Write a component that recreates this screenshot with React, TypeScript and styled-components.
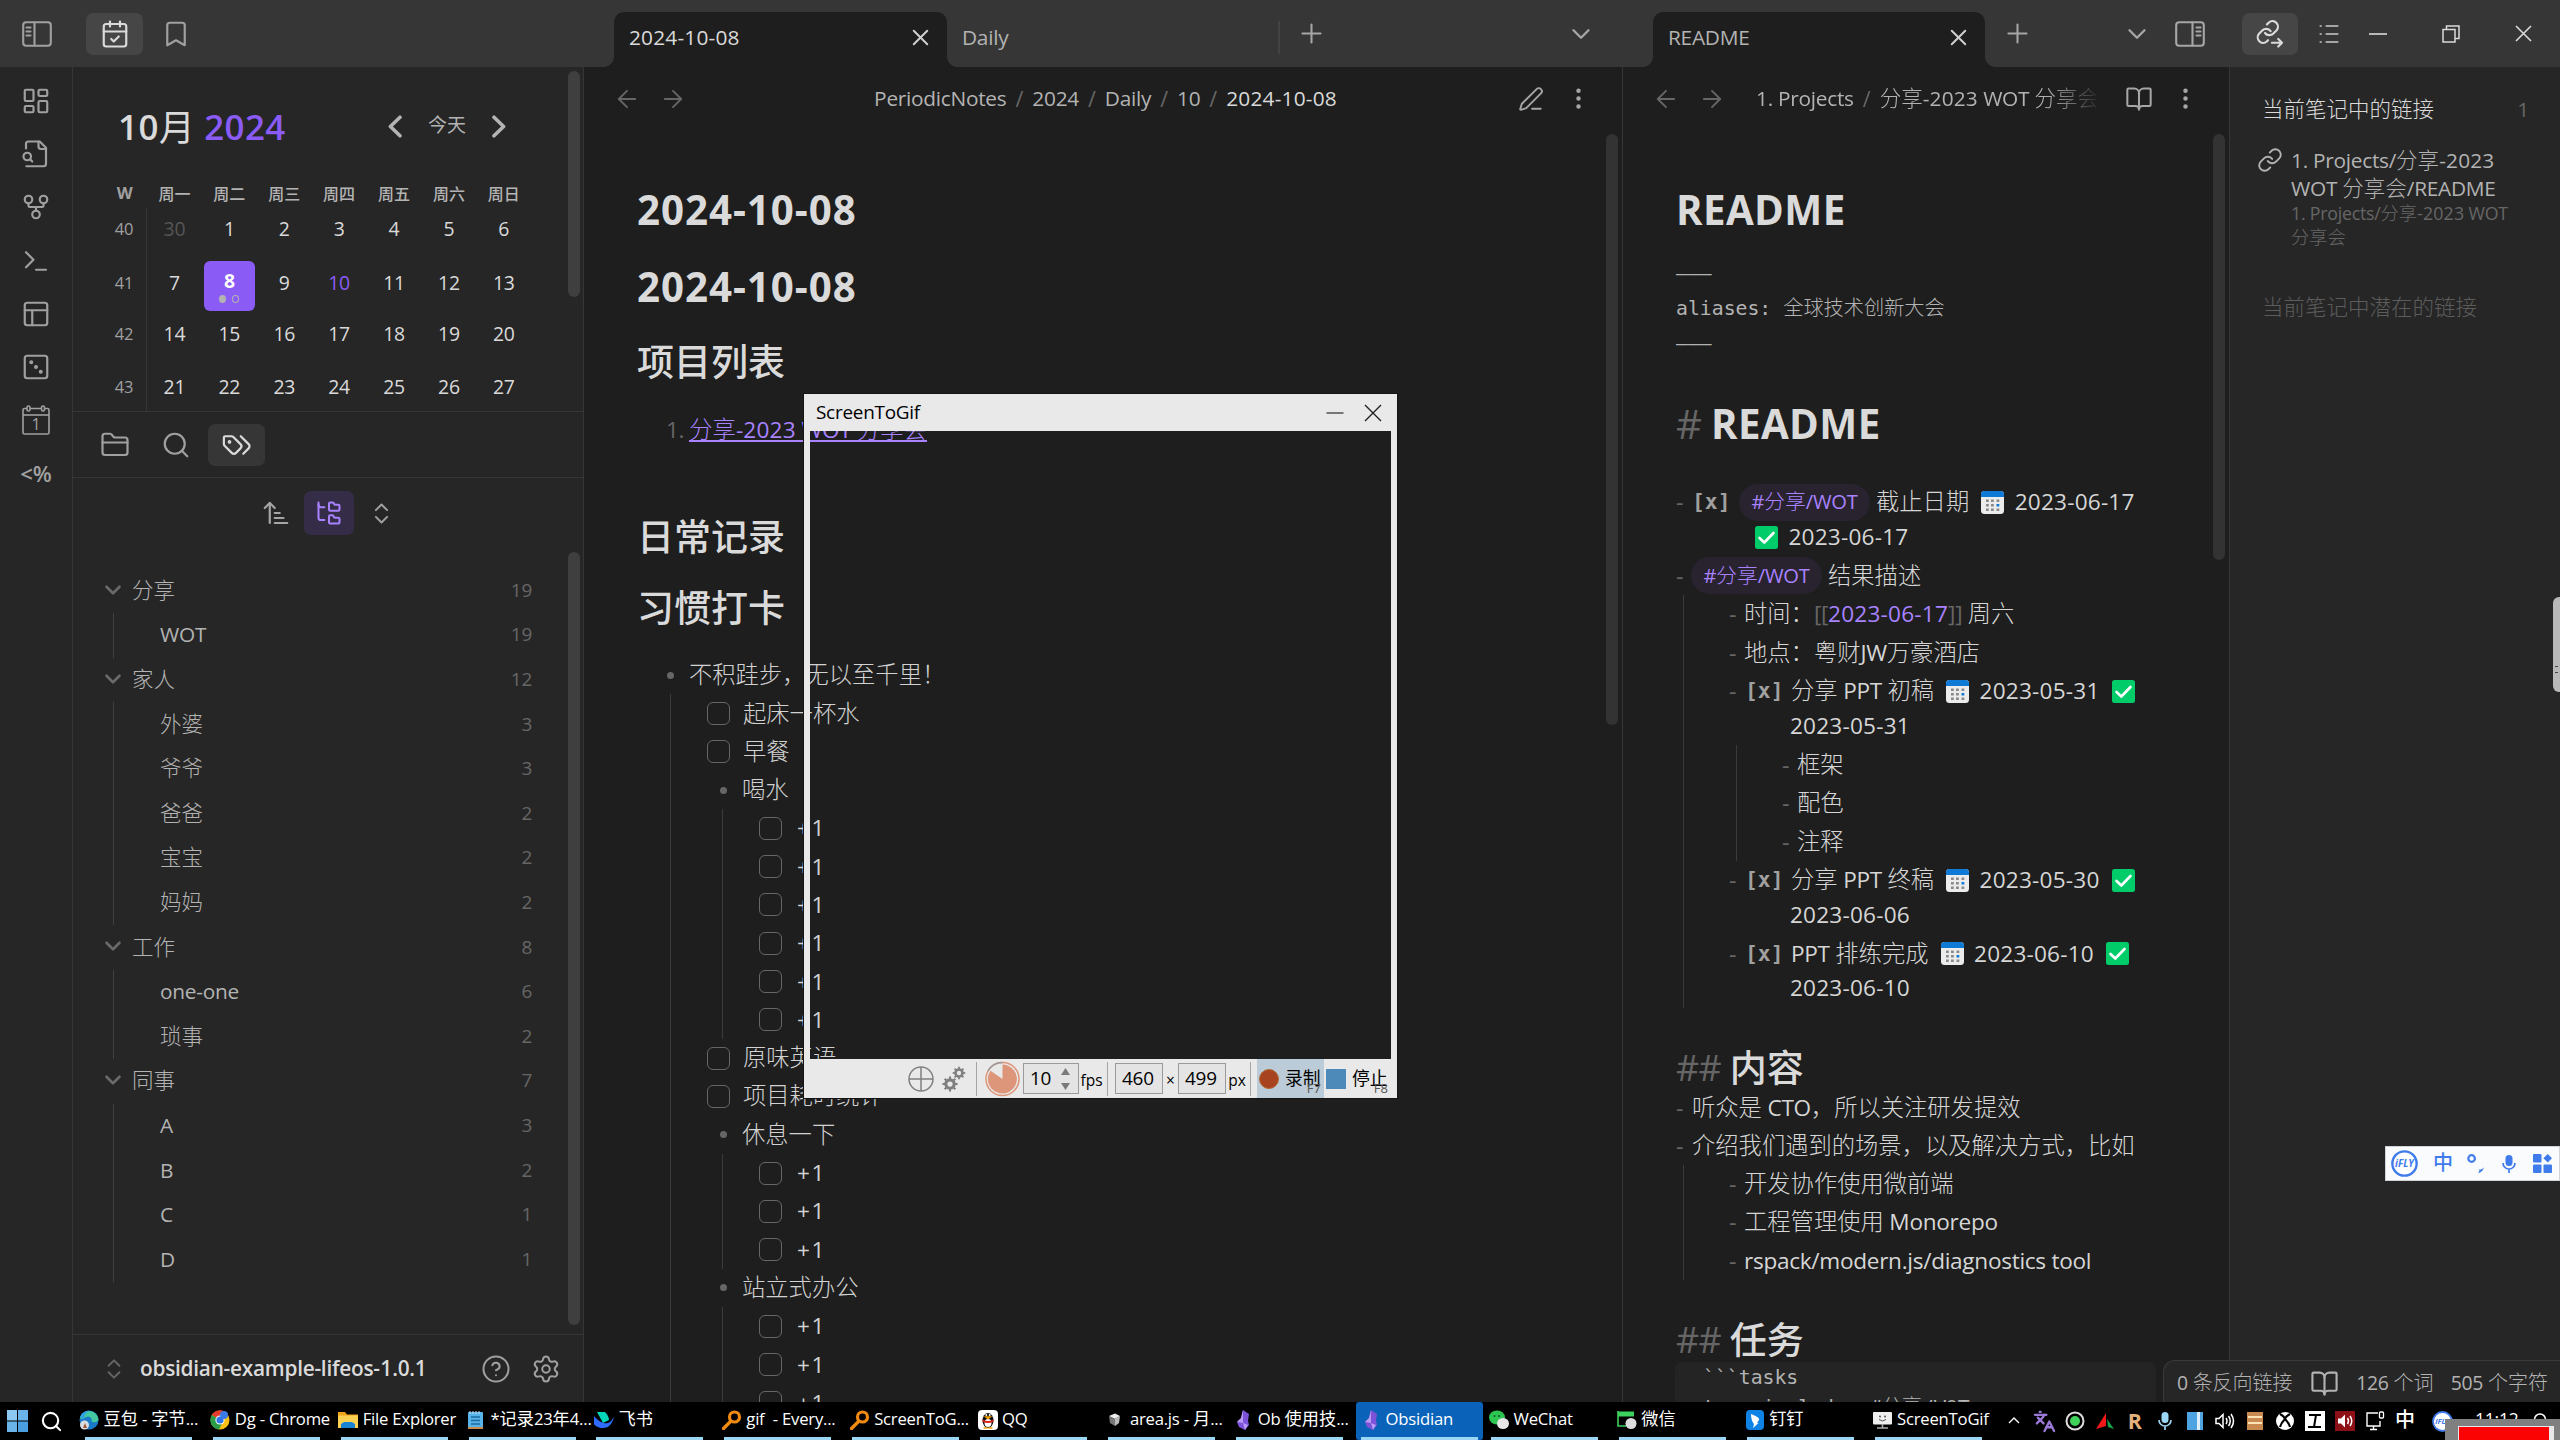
import React from 'react';
import styled, { createGlobalStyle, css } from 'styled-components';
import {
  ArrowLeft, ArrowRight, ArrowUpNarrowWide, Bookmark, BookOpen, CalendarCheck, ChevronDown,
  ChevronsUpDown, CircleHelp, FolderTree, GitFork, Languages, LayoutDashboard,
  Link, EllipsisVertical, PenLine, Plus, Search, Settings, Terminal, X,
} from 'lucide-react';

const c = {
  bar: '#363636', side: '#262626', main: '#1e1e1e', line: '#363636', hover: '#464646',
  text: '#dadada', muted: '#b3b3b3', faint: '#666666', accent: '#8a5cf5', link: '#a882ff',
};

const Global = createGlobalStyle`
  * { box-sizing: border-box; }
  html, body { margin: 0; padding: 0; background: #1e1e1e; overflow: hidden; }
  body { font-family: "Open Sans", "Noto Sans", "Noto Sans CJK SC", sans-serif; color: ${c.text}; }
  svg { display: block; flex: none; }
`;

/* ---------- text ---------- */

const Latin = styled.span<{ $num?: boolean }>`
  font-size: 0.97em;
  letter-spacing: ${p => (p.$num ? 'var(--num, 0.009em)' : 'var(--ls, -0.013em)')};
  line-height: 0;
  vertical-align: 0.045em;
`;
const Han = styled.span`
  font-family: "Noto Sans CJK SC", sans-serif;
  font-weight: var(--han, 300);
  line-height: 0;
  vertical-align: 0.03em;
`;
const Run = styled.span`white-space: pre;`;
const Mixed = ({ children }: { children: string }) => (
  <Run>
    {children.split(/([\u2E80-\uFFEF]+|\d*-\d[\d-]*)/).filter(Boolean).map((run, i) =>
      /[\u2E80-\uFFEF]/.test(run)
        ? <Han key={i}>{run}</Han>
        : <Latin key={i} $num={/^\d*-\d/.test(run)}>{run}</Latin>)}
  </Run>
);

interface TextProps { $size?: number; $color?: string; $weight?: number; $han?: number; $ml?: number }
const Text = styled.span<TextProps>`
  white-space: pre;
  flex: none;
  ${p => p.$size && css`font-size: ${p.$size}px;`}
  ${p => p.$color && css`color: ${p.$color};`}
  ${p => p.$weight && css`font-weight: ${p.$weight};`}
  ${p => p.$han && css`--han: ${p.$han};`}
  ${p => p.$ml && css`margin-left: ${p.$ml}px;`}
`;

/* ---------- shell ---------- */

const Screen = styled.div`
  width: 2560px; height: 1440px; position: relative; overflow: hidden;
  display: flex; flex-direction: column; background: ${c.main};
`;
const TitleBar = styled.header`display: flex; height: 67px; background: ${c.bar}; flex: none;`;
const TabGroup = styled.div<{ $w: number; $pl?: number }>`
  width: ${p => p.$w}px; padding-left: ${p => p.$pl || 0}px; display: flex; align-items: stretch;
`;
const Slot = styled.div<{ $w: number; $color?: string; $pt?: number }>`
  width: ${p => p.$w}px; flex: none; display: flex; align-items: center; justify-content: center;
  color: ${p => p.$color || '#a6a6a6'}; padding-top: ${p => p.$pt || 0}px;
`;
const IconButton = styled.div<{ $active?: boolean; $w?: number; $bg?: string; $ml?: number }>`
  width: ${p => p.$w || 57}px; height: 42px; border-radius: 7px; align-self: center; flex: none;
  display: flex; align-items: center; justify-content: center; margin-left: ${p => p.$ml || 0}px;
  background: ${p => (p.$active ? p.$bg || c.hover : 'transparent')};
  color: ${p => (p.$active ? '#dadada' : '#a0a0a0')};
`;
const Spacer = styled.div`flex: 1;`;
const Gap = styled.div<{ $h?: number; $w?: number }>`height: ${p => p.$h || 0}px; width: ${p => p.$w || 0}px; flex: none;`;
const Tab = styled.div<{ $active?: boolean; $w: number }>`
  position: relative; width: ${p => p.$w}px; margin-top: 12px; height: 55px; flex: none;
  padding: 0 13px 4px 15px; display: flex; align-items: center; justify-content: space-between;
  border-radius: 10px 10px 0 0; font-size: 21.5px; line-height: 51px;
  color: ${p => (p.$active ? c.text : c.muted)};
  background: ${p => (p.$active ? c.main : 'transparent')};
  ${p => p.$active && css`
    &::before, &::after { content: ''; position: absolute; bottom: 0; width: 10px; height: 10px; }
    &::before { left: -10px; background: radial-gradient(circle at 0 0, transparent 9.5px, ${c.main} 10px); }
    &::after { right: -10px; background: radial-gradient(circle at 100% 0, transparent 9.5px, ${c.main} 10px); }
  `}
`;
const TabDivider = styled.div`width: 2px; height: 33px; margin-top: 21px; margin-left: -2px; background: #434343;`;

const Body = styled.div`display: flex; height: 1335px; flex: none; overflow: hidden;`;
const Ribbon = styled.nav`
  width: 73px; border-right: 1px solid ${c.line}; background: ${c.side}; color: #a0a0a0; flex: none;
  display: flex; flex-direction: column; align-items: center; padding-top: 7.5px;
`;
const RibbonItem = styled.div`height: 53.2px; display: flex; align-items: center; justify-content: center; font-weight: 600; flex: none;`;
const Sidebar = styled.aside`width: 511px; border-right: 1px solid ${c.line}; background: ${c.side}; display: flex; flex-direction: column; flex: none;`;

/* ---------- calendar ---------- */

const CalendarPanel = styled.section`height: 345px; border-bottom: 1px solid ${c.line}; display: flex; overflow: hidden; flex: none;`;
const CalendarMain = styled.div`flex: 1; padding-top: 29px;`;
const Rail = styled.div<{ $w: number; $pt: number; $pr: number }>`
  width: ${p => p.$w}px; padding: ${p => p.$pt}px ${p => p.$pr}px 0 0; flex: none;
`;
const Thumb = styled.div<{ $h: number; $bg?: string }>`height: ${p => p.$h}px; border-radius: 6px; background: ${p => p.$bg || '#3f3f3f'};`;
const CalHead = styled.div`
  height: 60px; padding: 0 62px 0 45px; display: flex; align-items: center; justify-content: space-between;
`;
const CalTitle = styled.div`
  font-size: 36px; line-height: 60px; padding-top: 5px; font-weight: 600; white-space: pre; --han: 400; --ls: 0.012em;
  span:last-child { color: ${c.accent}; }
`;
const CalNav = styled.div`display: flex; align-items: center; gap: 26px; color: ${c.muted}; font-size: 19px; line-height: 36px;`;
const CalGrid = styled.div`padding-left: 29px; margin-top: 24px;`;
const WeekRow = styled.div<{ $h: number; $pb?: number; $head?: boolean }>`
  display: grid; grid-template-columns: 45px repeat(7, 54.9px); height: ${p => p.$h}px;
  font-size: 20px; line-height: 28px; text-align: center; color: ${c.text};
  > div { display: flex; align-items: center; justify-content: center; padding-bottom: ${p => p.$pb || 0}px; }
  > div:first-child { font-size: 17px; color: #a0a0a0; ${p => !p.$head && css`border-right: 1px solid ${c.line};`} }
  ${p => p.$head && css`font-size: 16px; color: ${c.muted}; font-weight: 700; --han: 500;`}
`;
const Today = styled.div`
  width: 51px; height: 50px; margin-top: 4px; border-radius: 6px; background: ${c.accent}; color: #fff; font-weight: 700;
  display: flex; flex-direction: column; align-items: center; padding-top: 7px; flex: none;
`;
const Dots = styled.div`display: flex; gap: 6px; margin-top: -1px;`;
const Dot = styled.i<{ $open?: boolean }>`
  width: 7px; height: 8px; border-radius: 50%;
  ${p => (p.$open ? css`border: 1.5px solid #b3b3b3;` : css`background: #b3b3b3;`)}
`;

const WEEKS: string[][] = [
  ['40', '30', '1', '2', '3', '4', '5', '6'],
  ['41', '7', '8', '9', '10', '11', '12', '13'],
  ['42', '14', '15', '16', '17', '18', '19', '20'],
  ['43', '21', '22', '23', '24', '25', '26', '27'],
];

const NavChevron = ({ flip }: { flip?: boolean }) => (
  <svg width="14" height="23" viewBox="0 0 14 23" fill="none" stroke="#b3b3b3" strokeWidth="3.6" strokeLinecap="round" strokeLinejoin="round">
    <path d={flip ? 'M2 2.2 11.6 11.5 2 20.8' : 'M12 2.2 2.4 11.5 12 20.8'} />
  </svg>
);

const Calendar = () => (
  <CalendarPanel>
    <CalendarMain>
      <CalHead>
        <CalTitle><Latin>10</Latin><Han>月</Han> <Latin>2024</Latin></CalTitle>
        <CalNav><NavChevron /><Text $han={400}><Mixed>今天</Mixed></Text><NavChevron flip /></CalNav>
      </CalHead>
      <CalGrid>
        <WeekRow $h={28} $pb={4} $head>
          {['W', '周一', '周二', '周三', '周四', '周五', '周六', '周日'].map(d => <div key={d}><Mixed>{d}</Mixed></div>)}
        </WeekRow>
        {WEEKS.map((w, r) => (
          <WeekRow key={r} $h={r === 0 ? 48.6 : 52.6} $pb={r === 0 ? 4 : 0}>
            {w.map((d, i) => (
              <div key={i}>
                {d === '8' ? <Today><Mixed>8</Mixed><Dots><Dot /><Dot $open /></Dots></Today>
                  : <Text $color={d === '30' ? '#555' : d === '10' ? c.accent : undefined}><Mixed>{d}</Mixed></Text>}
              </div>
            ))}
          </WeekRow>
        ))}
      </CalGrid>
    </CalendarMain>
    <Rail $w={15} $pt={4} $pr={3}><Thumb $h={226} /></Rail>
  </CalendarPanel>
);

/* ---------- custom line glyphs ---------- */

const Glyph = ({ children, size = 30, sw = 1.75 }: { children: React.ReactNode; size?: number; sw?: number }) => (
  <svg width={size} height={size} viewBox="0 0 24 24" fill="none" stroke="currentColor" strokeWidth={sw} strokeLinecap="round" strokeLinejoin="round">
    {children}
  </svg>
);
const SideToggle = ({ right }: { right?: boolean }) => (
  <svg width="30" height="26" viewBox="0 0 30 26" fill="none" stroke="currentColor" strokeWidth="2.1" strokeLinecap="round">
    <rect x="1.2" y="1.2" width="27.6" height="23.6" rx="3" />
    {right ? <path d="M17.5 1.5v23M21.5 6.5h4M21.5 10.5h4M21.5 14.5h4" /> : <path d="M12.5 1.5v23M4.5 6.5h4M4.5 10.5h4M4.5 14.5h4" />}
  </svg>
);
const FolderGlyph = () => (
  <Glyph>
    <path d="M20 20a2 2 0 0 0 2-2V8a2 2 0 0 0-2-2h-7.9a2 2 0 0 1-1.69-.9L9.6 3.9A2 2 0 0 0 7.93 3H4a2 2 0 0 0-2 2v13a2 2 0 0 0 2 2Z" />
    <path d="M2 10h20" />
  </Glyph>
);
const FileSearchGlyph = () => (
  <Glyph>
    <path d="M14 2v4a2 2 0 0 0 2 2h4" />
    <path d="M4.300 21.800H18a2 2 0 0 0 2-2V7l-5-5H6a2 2 0 0 0-2 2v3.500" />
    <circle cx="5" cy="14" r="3" /><path d="m9 18-1.500-1.500" />
  </Glyph>
);
const LayoutGlyph = () => <Glyph><rect x="3" y="3" width="18" height="18" rx="2" /><path d="M3 9h18M9 21V9" /></Glyph>;
const DiceGlyph = () => (
  <Glyph>
    <rect x="3" y="3" width="18" height="18" rx="2" />
    <g fill="currentColor" strokeWidth="1"><circle cx="8.200" cy="8.200" r="1.100" /><circle cx="12" cy="12" r="1.100" /><circle cx="15.800" cy="15.800" r="1.100" /></g>
  </Glyph>
);
const TagsGlyph = () => (
  <Glyph>
    <path d="M9.586 5.586A2 2 0 0 0 8.172 5H3a1 1 0 0 0-1 1v5.172a2 2 0 0 0 .586 1.414L8.290 18.290a2.426 2.426 0 0 0 3.420 0l3.580-3.580a2.426 2.426 0 0 0 0-3.420z" transform="translate(-.5 0)" />
    <path d="m15 5 6.300 6.300a2.400 2.400 0 0 1 0 3.400L17 19" /><circle cx="6" cy="9.500" r=".6" fill="currentColor" />
  </Glyph>
);
const DayGlyph = () => (
  <svg width="30" height="32" viewBox="0 0 30 32" fill="none" stroke="currentColor" strokeWidth="1.6">
    <rect x="2" y="4.5" width="26" height="25.5" rx="1.5" /><path d="M2 11h26" />
    <rect x="6" y="2" width="3" height="5" rx="1.5" fill="#262626" /><rect x="20.5" y="2" width="3" height="5" rx="1.5" fill="#262626" />
    <text x="15" y="26" fontSize="16" fontWeight="400" textAnchor="middle" fill="currentColor" stroke="none" fontFamily="Open Sans">1</text>
  </svg>
);
const ListGlyph = () => (
  <svg width="20" height="20" viewBox="0 0 20 20" stroke="currentColor" strokeWidth="2.200" strokeLinecap="round">
    <path d="M7.500 2h11M7.500 10h11M7.500 18h11M1.500 2h.4M1.500 10h.4M1.500 18h.4" />
  </svg>
);
const RestoreGlyph = () => (
  <svg width="18" height="18" viewBox="0 0 18 18" fill="none" stroke="#dadada" strokeWidth="1.5"><rect x="1" y="4.5" width="12" height="12.5" /><path d="M4.5 4.500V1H17v12.500h-4" /></svg>
);
const LinkOut = () => (
  <Glyph>
    <path d="M9 12.200a4.400 4.400 0 0 0 6.700.4l2.600-2.600a4.400 4.400 0 0 0-6.200-6.200l-1.500 1.500" transform="translate(-1 -1)" />
    <path d="M12.700 10.300a4.400 4.400 0 0 0-6.700-.5l-2.600 2.600a4.400 4.400 0 0 0 6.200 6.200l1-1" transform="translate(-.2 -.6)" />
    <path d="M13.500 19h8M18.600 16l3 3-3 3" />
  </Glyph>
);

/* ---------- tags panel ---------- */

const PaneTabs = styled.div`height: 66px; border-bottom: 1px solid ${c.line}; padding-left: 13px; display: flex; gap: 4px; flex: none;`;
const TagTools = styled.div`height: 74px; padding: 0 0 4px 184px; display: flex; align-items: center; color: #a0a0a0; flex: none;`;
const TreeToggle = styled.div`width: 50px; height: 44px; border-radius: 7px; background: #352d47; color: ${c.link}; display: flex; align-items: center; justify-content: center; margin: 0 14px 0 10px;`;
const TagArea = styled.div`flex: 1; display: flex; min-height: 0;`;
const TagList = styled.div`flex: 1; padding-top: 16.5px;`;
const TagRow = styled.div<{ $child?: boolean }>`
  height: 44.6px; line-height: 44px; display: flex; align-items: center; justify-content: space-between;
  margin-left: 40px; padding: 0 36px 0 ${p => (p.$child ? 46 : 19)}px; font-size: 21.5px; color: ${c.muted};
  position: relative;
  ${p => p.$child && css`border-left: 1px solid #404040;`}
`;
const Fold = styled.div`position: absolute; left: -13px; top: 8px; color: #6a6a6a;`;
const Vault = styled.footer`
  height: 68px; border-top: 1px solid ${c.line}; display: flex; align-items: center; padding: 0 22px 0 27px;
  font-size: 21.5px; line-height: 60px; font-weight: 600; color: ${c.text}; flex: none; --ls: -0.013em;
`;
const VaultActions = styled.div`display: flex; gap: 20px; margin-left: auto; color: #a0a0a0;`;

const TAGS: [string, string, boolean][] = [
  ['分享', '19', false], ['WOT', '19', true], ['家人', '12', false], ['外婆', '3', true], ['爷爷', '3', true],
  ['爸爸', '2', true], ['宝宝', '2', true], ['妈妈', '2', true], ['工作', '8', false], ['one-one', '6', true],
  ['琐事', '2', true], ['同事', '7', false], ['A', '3', true], ['B', '2', true], ['C', '1', true], ['D', '1', true],
];

const TagsPanel = () => (
  <>
    <PaneTabs>
      <IconButton><FolderGlyph /></IconButton>
      <IconButton><Search size={30} strokeWidth={1.75} /></IconButton>
      <IconButton $active $bg="#363636"><TagsGlyph /></IconButton>
    </PaneTabs>
    <TagTools>
      <Slot $w={37}><ArrowUpNarrowWide size={30} strokeWidth={1.75} /></Slot>
      <TreeToggle><FolderTree size={28} strokeWidth={1.75} /></TreeToggle>
      <ChevronsUpDown size={27} strokeWidth={1.75} />
    </TagTools>
    <TagArea>
      <TagList>
        {TAGS.map(([name, n, child]) => (
          <TagRow key={name} $child={child}>
            {!child && <Fold><ChevronDown size={26} strokeWidth={2.4} /></Fold>}
            <Text><Mixed>{name}</Mixed></Text>
            <Text $size={19.5} $color={c.faint}><Mixed>{n}</Mixed></Text>
          </TagRow>
        ))}
      </TagList>
      <Rail $w={15} $pt={0} $pr={3}><Thumb $h={773} /></Rail>
    </TagArea>
    <Vault>
      <Slot $w={27} $color="#666"><ChevronsUpDown size={26} strokeWidth={1.75} /></Slot>
      <Text $ml={13}><Mixed>obsidian-example-lifeos-1.0.1</Mixed></Text>
      <VaultActions><CircleHelp size={30} strokeWidth={1.6} /><Settings size={30} strokeWidth={1.6} /></VaultActions>
    </Vault>
  </>
);

/* ---------- view header ---------- */

const Pane = styled.section<{ $w: number }>`width: ${p => p.$w}px; border-right: 1px solid ${c.line}; display: flex; flex-direction: column; flex: none;`;
const ViewHeader = styled.div`height: 63px; display: flex; align-items: stretch; padding: 0 20px; flex: none;`;
const Crumbs = styled.div<{ $fade?: boolean; $pl: number }>`
  flex: 1; min-width: 0; display: flex; align-items: center; justify-content: ${p => (p.$fade ? 'flex-start' : 'center')};
  padding-left: ${p => p.$pl}px; font-size: 21.5px; line-height: 62px; color: ${c.muted}; white-space: pre; overflow: hidden;
  ${p => p.$fade && css`margin-right: 20px; mask-image: linear-gradient(90deg, #000 calc(100% - 50px), transparent 102%);`}
`;
const Sep = styled.span`color: ${c.faint}; margin: 0 9px;`;
const ViewBody = styled.div`flex: 1; min-height: 0; display: flex; overflow: hidden;`;
const Doc = styled.div<{ $pl: number }>`flex: 1; min-width: 0; padding: 53px 0 0 ${p => p.$pl}px; font-size: 23.3px;`;
const Heading = styled.div<{ $h: number; $mt?: number; $size: number }>`
  height: ${p => p.$h}px; line-height: ${p => p.$h}px; margin-top: ${p => p.$mt || 0}px; font-size: ${p => p.$size}px;
  font-weight: 700; --han: 500; --num: 0.024em; --ls: 0.010em; color: ${c.text}; white-space: pre;
`;
const Mark = styled.span`color: ${c.faint}; font-weight: 400; --ls: -0.018em;`;

/* ---------- daily note ---------- */

const Task = styled.div<{ $pl: number }>`
  height: 38.3px; line-height: 38px; padding-left: ${p => p.$pl}px; display: flex; align-items: center; color: #d2d2d2; white-space: pre;
`;
const Guide = styled.div<{ $ml: number; $ls?: string }>`
  margin-left: ${p => p.$ml}px; border-left: 1px solid #3a3a3a; ${p => p.$ls && css`--ls: ${p.$ls};`}
`;
const Check = styled.i<{ $mr: number }>`
  width: 23px; height: 23px; border: 1.5px solid #666; border-radius: 6px; margin-right: ${p => p.$mr}px; flex: none;
`;
const Bullet = styled.i<{ $mr: number }>`width: 7px; height: 7px; border-radius: 50%; background: #666; margin-right: ${p => p.$mr}px; flex: none;`;
const OrderedLink = styled.div`
  height: 38.3px; line-height: 38px; margin-top: 23px; padding-left: 29px; display: flex; white-space: pre;
  color: ${c.faint};
`;
const NoteLink = styled.span`color: ${c.link}; margin-left: 5px; height: 31px; border-bottom: 2px solid ${c.link};`;

const Plus1 = ({ n }: { n: number }) => (
  <Guide $ml={51} $ls="0.07em">
    {Array.from({ length: n }, (_, i) => <Task key={i} $pl={36}><Check $mr={15} /><Mixed>+1</Mixed></Task>)}
  </Guide>
);
const CheckTask = ({ children }: { children: string }) => <Task $pl={36}><Check $mr={13} /><Mixed>{children}</Mixed></Task>;
const BulletTask = ({ children }: { children: string }) => <Task $pl={49}><Bullet $mr={15} /><Mixed>{children}</Mixed></Task>;

const DailyNote = () => (
  <Pane $w={1039}>
    <ViewHeader>
      <Slot $w={46} $color="#666"><ArrowLeft size={28} strokeWidth={1.6} /></Slot>
      <Slot $w={46} $color="#666"><ArrowRight size={28} strokeWidth={1.6} /></Slot>
      <Crumbs $pl={8}>
        {['PeriodicNotes', '2024', 'Daily', '10'].map(t => <React.Fragment key={t}><Mixed>{t}</Mixed><Sep>/</Sep></React.Fragment>)}
        <Text $color={c.text}><Mixed>2024-10-08</Mixed></Text>
      </Crumbs>
      <Slot $w={47}><PenLine size={26} strokeWidth={1.75} /></Slot>
      <Slot $w={48}><EllipsisVertical size={27} strokeWidth={2} /></Slot>
    </ViewHeader>
    <ViewBody>
      <Doc $pl={53}>
        <Heading $h={56} $size={41.500}><Mixed>2024-10-08</Mixed></Heading>
        <Heading $h={56} $size={41.500} $mt={21.400}><Mixed>2024-10-08</Mixed></Heading>
        <Heading $h={50} $size={37} $mt={22}><Mixed>项目列表</Mixed></Heading>
        <OrderedLink><Mixed>1.</Mixed><NoteLink><Mixed>分享-2023 WOT 分享会</Mixed></NoteLink></OrderedLink>
        <Heading $h={50} $size={37} $mt={63.700}><Mixed>日常记录</Mixed></Heading>
        <Heading $h={50} $size={37} $mt={21}><Mixed>习惯打卡</Mixed></Heading>
        <Gap $h={21.7} />
        <Task $pl={30}><Bullet $mr={15} /><Mixed>不积跬步，无以至千里！</Mixed></Task>
        <Guide $ml={33}>
          <CheckTask>起床一杯水</CheckTask>
          <CheckTask>早餐</CheckTask>
          <BulletTask>喝水</BulletTask>
          <Plus1 n={6} />
          <CheckTask>原味英语</CheckTask>
          <CheckTask>项目耗时统计</CheckTask>
          <BulletTask>休息一下</BulletTask>
          <Plus1 n={3} />
          <BulletTask>站立式办公</BulletTask>
          <Plus1 n={3} />
        </Guide>
      </Doc>
      <Rail $w={16} $pt={4} $pr={4}><Thumb $h={591} $bg="#333" /></Rail>
    </ViewBody>
  </Pane>
);

/* ---------- readme source ---------- */

const Mono = styled.div<{ $pl?: number; $h?: number }>`
  font-family: "DejaVu Sans Mono", "Noto Sans CJK SC", monospace; font-size: 19.8px; height: ${p => p.$h || 35}px; line-height: ${p => p.$h || 35}px;
  color: ${c.muted}; white-space: pre; padding-left: ${p => p.$pl || 0}px;
`;
const MonoHan = styled.span`font-family: "Noto Sans CJK SC"; font-size: 20.2px; font-weight: 300; line-height: 0;`;
const Item = styled.div<{ $pad?: number }>`padding: ${p => p.$pad ?? 2}px 0; color: #d6d6d6;`;
const Line = styled.div<{ $pl?: number }>`
  height: 34.6px; line-height: 34px; display: flex; align-items: center; white-space: pre; padding-left: ${p => p.$pl || 0}px;
`;
const Dash = styled.span<{ $w?: number }>`width: ${p => p.$w || 15}px; color: ${c.faint}; flex: none;`;
const Done = styled.span<{ $w?: number }>`
  width: ${p => p.$w || 46}px; font-family: "DejaVu Sans Mono", monospace; font-size: 21.300px; color: #a0a0a0; font-weight: 700; flex: none;
`;
const Pill = styled.span`
  width: 131px; height: 37px; line-height: 36px; border-radius: 19px; background: #28232f; color: ${c.link}; font-size: 20.8px;
  display: flex; align-items: center; justify-content: center; margin-right: 6px; flex: none;
`;
const Sub = styled.div`margin-left: 7px; border-left: 1px solid #3a3a3a; padding-left: 45px;`;
const Code = styled.div`margin: 1px 0 0 -1px; padding-top: 1px; width: 481px; height: 120px; border-radius: 7px; background: #242424;`;
const Emoji = styled.svg`margin: 0 10.5px 0 12px;`;

const CalEmoji = () => (
  <Emoji width="23" height="23" viewBox="0 0 23 23">
    <rect width="23" height="23" rx="3.500" fill="#ececec" /><path d="M0 6V3.500A3.500 3.500 0 0 1 3.500 0h16A3.500 3.500 0 0 1 23 3.500V6z" fill="#0f7ad6" />
    <g fill="#8a8a8a">{[8.500, 13, 17.500].map(y => [5, 10, 15.500].map(x => <rect key={`${x}${y}`} x={x} y={y} width="2.800" height="2.500" fill={x > 15 && y === 13 ? '#0f7ad6' : undefined} />))}</g>
  </Emoji>
);
const OkEmoji = () => (
  <Emoji width="23" height="23" viewBox="0 0 23 23"><rect width="23" height="23" rx="2.500" fill="#00cc6a" /><path d="m4.500 12 4.800 4.500L18.500 7" fill="none" stroke="#fff" strokeWidth="2.600" strokeLinecap="round" strokeLinejoin="round" /></Emoji>
);
const DoneItem = ({ title, due, done }: { title: string; due: string; done: string }) => (
  <Item>
    <Line><Dash $w={16}>-</Dash><Done>[x]</Done><Mixed>{title}</Mixed><CalEmoji /><Mixed>{due}</Mixed><OkEmoji /></Line>
    <Line $pl={61}><Mixed>{done}</Mixed></Line>
  </Item>
);
const Plain = ({ children, pad, w }: { children: React.ReactNode; pad?: number; w?: number }) => <Item $pad={pad}><Line><Dash $w={w}>-</Dash>{children}</Line></Item>;

const Readme = () => (
  <Pane $w={607}>
    <ViewHeader>
      <Slot $w={46} $color="#666"><ArrowLeft size={28} strokeWidth={1.6} /></Slot>
      <Slot $w={46} $color="#666"><ArrowRight size={28} strokeWidth={1.6} /></Slot>
      <Crumbs $fade $pl={21}><Mixed>1. Projects</Mixed><Sep>/</Sep><Mixed>分享-2023 WOT 分享会</Mixed></Crumbs>
      <Slot $w={46}><BookOpen size={28} strokeWidth={1.75} /></Slot>
      <Slot $w={47}><EllipsisVertical size={27} strokeWidth={2} /></Slot>
    </ViewHeader>
    <ViewBody>
      <Doc $pl={53}>
        <Heading $h={56} $size={41.500}><Mixed>README</Mixed></Heading>
        <Gap $h={17} />
        <Mono>–––</Mono>
        <Mono>aliases: <MonoHan>全球技术创新大会</MonoHan></Mono>
        <Mono>–––</Mono>
        <Heading $h={56} $size={41.500} $mt={36}><Mark><Mixed># </Mixed></Mark><Mixed>README</Mixed></Heading>
        <Gap $h={30.2} />
        <Item>
          <Line><Dash $w={16}>-</Dash><Done $w={47}>[x]</Done><Pill><Mixed>#分享/WOT</Mixed></Pill><Mixed>截止日期</Mixed><CalEmoji /><Mixed>2023-06-17</Mixed></Line>
          <Line $pl={67}><OkEmoji /><Mixed>2023-06-17</Mixed></Line>
        </Item>
        <Plain><Pill><Mixed>#分享/WOT</Mixed></Pill><Mixed>结果描述</Mixed></Plain>
        <Sub>
          <Plain><Mixed>时间：</Mixed><Text $color={c.faint}><Mixed>[[</Mixed></Text><Text $color={c.link}><Mixed>2023-06-17</Mixed></Text><Text $color={c.faint}><Mixed>]] </Mixed></Text><Mixed>周六</Mixed></Plain>
          <Plain><Mixed>地点：粤财JW万豪酒店</Mixed></Plain>
          <DoneItem title="分享 PPT 初稿" due="2023-05-31" done="2023-05-31" />
          <Sub>
            <Plain><Mixed>框架</Mixed></Plain>
            <Plain><Mixed>配色</Mixed></Plain>
            <Plain><Mixed>注释</Mixed></Plain>
          </Sub>
          <DoneItem title="分享 PPT 终稿" due="2023-05-30" done="2023-06-06" />
          <DoneItem title="PPT 排练完成" due="2023-06-10" done="2023-06-10" />
        </Sub>
        <Heading $h={40} $size={37} $mt={41}><Mark><Mixed>## </Mixed></Mark><Mixed>内容</Mixed></Heading>
        <Plain pad={1.85} w={16}><Mixed>听众是 CTO，所以关注研发提效</Mixed></Plain>
        <Plain pad={1.85} w={16}><Mixed>介绍我们遇到的场景，以及解决方式，比如</Mixed></Plain>
        <Sub>
          <Plain pad={1.85}><Mixed>开发协作使用微前端</Mixed></Plain>
          <Plain pad={1.85}><Mixed>工程管理使用 Monorepo</Mixed></Plain>
          <Plain pad={1.85}><Mixed>rspack/modern.js/diagnostics tool</Mixed></Plain>
        </Sub>
        <Heading $h={40} $size={37} $mt={41}><Mark><Mixed>## </Mixed></Mark><Mixed>任务</Mixed></Heading>
        <Code>
          <Mono $pl={28} $h={29.7}>```tasks</Mono>
          <Mono $pl={28} $h={29.7}>tags includes #<MonoHan>分享</MonoHan>/WOT</Mono>
        </Code>
      </Doc>
      <Rail $w={16} $pt={4} $pr={4}><Thumb $h={426} $bg="#333" /></Rail>
    </ViewBody>
  </Pane>
);

/* ---------- outgoing links ---------- */

const Links = styled.aside`flex: 1; background: ${c.side}; display: flex; flex-direction: column; font-size: 21.5px;`;
const LinksHead = styled.div<{ $mt: number; $color: string }>`
  margin-top: ${p => p.$mt}px; height: 40px; line-height: 40px; padding: 0 31px 0 32px; display: flex; justify-content: space-between; color: ${p => p.$color}; white-space: pre;
`;
const LinkItem = styled.div`display: flex; margin-top: 17px; padding-left: 27px; color: ${c.muted};`;
const LinkLines = styled.div`margin-left: 8px; white-space: pre; div { height: 28px; line-height: 28px; } div:nth-child(n+3) { height: 24px; line-height: 22px; font-size: 18.3px; color: ${c.faint}; }`;

/* ---------- overlays ---------- */

const StatusBar = styled.div`
  position: absolute; right: 0; top: 1360px; width: 397px; height: 42px; background: ${c.side};
  border: 1px solid #3a3a3a; border-width: 1px 0 0 1px; border-top-left-radius: 12px;
  display: flex; align-items: center; padding: 4px 12px 0 13px; justify-content: space-between; font-size: 20px; line-height: 34px; color: ${c.muted};
`;
const Ime = styled.div`
  position: absolute; left: 2385px; top: 1146px; width: 175px; height: 35px; background: #fafbfd; border: 1px solid #cfd3da;
  display: flex; align-items: center; padding-left: 4px; color: #3f7bea; font-size: 20px; line-height: 30px;
`;
const EdgeHandle = styled.div`
  position: absolute; right: 0; top: 597px; width: 7px; height: 95px; border-radius: 6px 0 0 6px; background: #b8b8b8;
  display: flex; align-items: center; justify-content: center; i { width: 3px; height: 7px; margin-top: 50px; border-top: 1px solid #444; border-bottom: 1px solid #444; }
`;
const GifWindow = styled.div`
  position: absolute; left: 804px; top: 394px; width: 593px; height: 704px; color: #000;
  border: solid #e9e9e9; border-width: 0 6px; box-shadow: 0 0 0 1px #141414;
  display: flex; flex-direction: column; justify-content: space-between;
`;
const GifTitle = styled.div`
  height: 37px; margin: 0 -6px; background: #e9e9e9; display: flex; align-items: center; padding: 0 15px 0 12px; font-size: 19.500px; line-height: 38px;
  svg { margin-left: 20px; }
`;
const GifTools = styled.div`
  height: 39px; margin: 0 -6px; background: #e9e9e9; display: flex; align-items: center; padding-left: 104px; font-size: 19.500px; line-height: 30px;
`;
const VSep = styled.i<{ $ml: number; $mr: number }>`width: 1px; height: 34px; background: #a5a5a5; margin: 0 ${p => p.$mr}px 0 ${p => p.$ml}px;`;
const Field = styled.div<{ $w: number }>`
  width: ${p => p.$w}px; height: 31px; border: 1px solid #9a9a9a; background: #e4e4e4; display: flex; align-items: center;
  justify-content: space-between; padding: 0 8px 0 6px; flex: none;
`;
const Unit = styled.span<{ $w: number }>`width: ${p => p.$w}px; text-align: center; font-size: 15.500px; padding-top: 3px; flex: none;`;
const RecButton = styled.div<{ $on?: boolean; $w: number }>`
  position: relative; width: ${p => p.$w}px; height: 39px; background: ${p => (p.$on ? '#bbcbd7' : 'transparent')};
  display: flex; align-items: center; gap: 6px; padding-left: 2px; font-size: 17.800px; flex: none; --han: 400;
  small { position: absolute; right: 3px; bottom: 1px; font-size: 13px; line-height: 17px; color: #555; }
`;

const Gear = ({ x, y, r }: { x: number; y: number; r: number }) => (
  <g transform={`translate(${x} ${y})`}>
    <circle r={r} fill="none" stroke="#808080" strokeWidth={r * 0.75} />
    {[0, 45, 90, 135, 180, 225, 270, 315].map(a => <rect key={a} x={-r * 0.25} y={-r * 1.8} width={r * 0.5} height={r * 0.7} fill="#808080" transform={`rotate(${a})`} />)}
  </g>
);

const Recorder = () => (
  <GifWindow>
    <GifTitle>
      <Mixed>ScreenToGif</Mixed><Spacer />
      <svg width="18" height="18" viewBox="0 0 18 18"><path d="M.5 9h17" stroke="#777" strokeWidth="2" /></svg>
      <svg width="18" height="18" viewBox="0 0 18 18"><path d="m1 1 16 16M17 1 1 17" stroke="#222" strokeWidth="1.400" /></svg>
    </GifTitle>
    <GifTools>
      <svg width="26" height="26" viewBox="0 0 26 26" fill="none" stroke="#808080" strokeWidth="1.500"><circle cx="13" cy="13" r="12" /><path d="M13 1v24M1 13h24" /></svg>
      <Gap $w={7} />
      <svg width="26" height="28" viewBox="0 0 26 28"><Gear x={9} y={19} r={4.2} /><Gear x={18} y={8} r={3.5} /></svg>
      <VSep $ml={9} $mr={8} />
      <svg width="35" height="36" viewBox="0 0 35 36"><circle cx="17.500" cy="18" r="16.500" fill="none" stroke="#dd967a" strokeWidth="1.500" /><path d="M3 10A16.500 16.500 0 0 1 17.500 1.500" fill="none" stroke="#999" strokeWidth="1.500" /><path d="M17.500 18V3.500A14.500 14.500 0 1 1 5.500 9.700z" fill="#dd967a" /></svg>
      <Gap $w={3} />
      <Field $w={56}><Mixed>10</Mixed><svg width="9" height="24" viewBox="0 0 9 24" fill="#7a7a7a"><path d="M4.500 1 9 8H0zM4.500 23 9 16H0z" /></svg></Field>
      <Unit $w={25}>fps</Unit>
      <VSep $ml={3} $mr={7} />
      <Field $w={48}><Mixed>460</Mixed></Field>
      <Unit $w={15}>×</Unit>
      <Field $w={48}><Mixed>499</Mixed></Field>
      <Unit $w={22}>px</Unit>
      <VSep $ml={2} $mr={6} />
      <RecButton $on $w={67}><svg width="20" height="20"><circle cx="10" cy="10" r="9.500" fill="#a8431f" stroke="#b06a35" /></svg><Mixed>录制</Mixed><small>F7</small></RecButton>
      <RecButton $w={67}><svg width="20" height="20"><rect width="20" height="20" fill="#4d8ab9" /></svg><Mixed>停止</Mixed><small>F8</small></RecButton>
    </GifTools>
  </GifWindow>
);

/* ---------- taskbar ---------- */

const TaskBar = styled.footer`height: 38px; background: #000; display: flex; align-items: stretch; flex: none; color: #fff;`;
const TaskItem = styled.div<{ $active?: boolean; $pl?: number }>`
  position: relative; width: 127.87px; display: flex; align-items: center; padding: 0 0 2px ${p => p.$pl ?? 5.5}px; font-size: 17.200px; line-height: 30px; flex: none;
  white-space: pre; --han: 400; border-radius: 3px; background: ${p => (p.$active ? '#0a63b9' : 'transparent')};
  &::after { content: ''; position: absolute; height: 3px; bottom: 0; background: #9bd6f5; left: ${p => (p.$active ? 5 : 8)}px; width: ${p => (p.$active ? 117 : 107)}px; }
`;
const AppIcon = styled.div`width: 24.5px; flex: none;`;
const Tray = styled.div`display: flex; align-items: center; padding-left: 4.5px;`;
const TrayCell = styled.div`width: 30.05px; display: flex; justify-content: center; align-items: center; font-size: 20px; line-height: 24px; --han: 400;`;

const I = ({ children }: { children: React.ReactNode }) => <svg width="20" height="20" viewBox="0 0 20 20">{children}</svg>;
const Gem = <I><path d="M9 0 15 4l-1 7 1 4-4 5-6-3-2-5 4-4z" fill="#7b52d8" transform="translate(1 0)" /><path d="M10 0 8 8l-4 4 6 1zM10 13l2 7 3-5z" fill="#b89bf5" /></I>;
const Everything = <I><circle cx="12.500" cy="7" r="5" fill="none" stroke="#f08a12" strokeWidth="3.200" /><path d="m8.500 11.500-7 7" stroke="#f08a12" strokeWidth="3.400" strokeLinecap="round" /></I>;

const APPS: { name: string; icon: React.ReactNode; active?: boolean; pl?: number }[] = [
  { name: '豆包 - 字节...', pl: 2, icon: <I><circle cx="10" cy="10" r="9.500" fill="#1b79c9" /><path d="M1 8a9.500 9.500 0 0 1 18.500 1c0 4-6 4-7 2 1-3-2-5-5-4S2 10 1 8z" fill="#44c8a0" /><path d="M1 7a9 9 0 0 1 10-6c-4 1-6 4-6 8z" fill="#2ea5e0" /><circle cx="5.500" cy="15" r="4.500" fill="#d8dde2" /><path d="m4 18 2-5 2 5z" fill="#a05a3a" /></I> },
  { name: 'Dg - Chrome', icon: <I><circle cx="10" cy="10" r="9.500" fill="#fbc116" /><path d="M1.800 5A9.500 9.500 0 0 1 18.200 5L10 10z" fill="#e33b2e" /><path d="M1.800 5A9.500 9.500 0 0 0 9 19.500l4-8z" fill="#2a9c48" /><circle cx="10" cy="10" r="4.600" fill="#fff" /><circle cx="10" cy="10" r="3.600" fill="#2f74e8" /><circle cx="14" cy="5" r="4" fill="#3a7be8" /></I> },
  { name: 'File Explorer', icon: <I><path d="M0 2h7l2 2.500h11V18H0z" fill="#f0a31c" /><path d="M0 5.500h20V18H0z" fill="#fcd050" /><path d="M3 18v-4l3-2h8l3 2v4z" fill="#1a83d4" /></I> },
  { name: '*记录23年4...', icon: <I><rect x="2" y="2" width="15" height="17" rx="1" fill="#56b4ea" /><path d="M5 7h9M5 10.500h9M5 14h9" stroke="#1c6a9e" strokeWidth="1.300" /><path d="M4 1v3M7 1v3M10 1v3M13 1v3" stroke="#cde" /><path d="M2 17h15v2H2z" fill="#c98b4a" /></I> },
  { name: '飞书', icon: <I><path d="M3 2h8c3 3 4 6 4 8L9 13z" fill="#00d6b9" /><path d="M0 6c5 6 10 8 14 7 3-1 4-4 6-6-2 8-6 11-11 11C5 18 1 16 0 14z" fill="#2f6bff" /></I> },
  { name: 'gif  - Every...', icon: Everything },
  { name: 'ScreenToG...', icon: Everything },
  { name: 'QQ', icon: <I><rect width="20" height="20" rx="4" fill="#fff" /><ellipse cx="10" cy="10.500" rx="5.500" ry="7.500" fill="#111" /><ellipse cx="10" cy="13" rx="3.500" ry="4" fill="#fff" /><path d="M4.500 9.500q5.500 3 11 0v2q-5.500 3-11 0z" fill="#e0201b" /><path d="M8 7h4l-2 1.500zM5.500 18h4M10.500 18h4" stroke="#f5a300" strokeWidth="1.500" fill="#f5a300" /><circle cx="8.300" cy="5" r="1" fill="#fff" /><circle cx="11.700" cy="5" r="1" fill="#fff" /></I> },
  { name: 'area.js - 月...', icon: <I><path d="m4 6 6-2.500 5 2.500-5 3z" fill="#eee" /><path d="m4 6 6 3v7l-5-3z" fill="#777" /><path d="m15 6-5 3v7l4-3z" fill="#bbb" /></I> },
  { name: 'Ob 使用技...', icon: Gem },
  { name: 'Obsidian', icon: Gem, active: true },
  { name: 'WeChat', icon: <I><ellipse cx="8" cy="7.500" rx="8" ry="7" fill="#2dc653" /><ellipse cx="14" cy="13.500" rx="6" ry="5.500" fill="#e6e6e6" /><circle cx="5.500" cy="6" r="1" fill="#0a5a20" /><circle cx="10" cy="6" r="1" fill="#0a5a20" /></I> },
  { name: '微信', icon: <I><rect x="1" y="1.500" width="16" height="5" fill="#3cd05c" /><path d="M1 1v15h8" fill="none" stroke="#3cd05c" strokeWidth="1.600" /><circle cx="14" cy="13.500" r="5.500" fill="#ddd" /></I> },
  { name: '钉钉', icon: <I><rect x="1" y="0" width="18" height="20" rx="4" fill="#0f82e6" /><path d="M6 4c5 2 9 4 8 6l-2 3h1.500L8 18l1-4c-2-2-3-6-3-10z" fill="#fff" /></I> },
  { name: 'ScreenToGif', icon: <I><rect x="0" y="2" width="19" height="12.500" rx="1" fill="#eee" /><circle cx="7" cy="6.500" r="1" fill="#555" /><circle cx="12" cy="6.500" r="1" fill="#555" /><path d="M6 9.500q3.500 3 7 0" stroke="#555" fill="none" /><path d="M9.500 14v4M4 18h11" stroke="#aaa" strokeWidth="1.600" /></I> },
];

const Mic = ({ color }: { color: string }) => <I><rect x="6.500" y="1" width="7" height="11" rx="3.500" fill={color} /><path d="M4 9a6 6 0 0 0 12 0M10 15v4" fill="none" stroke={color} strokeWidth="1.700" /></I>;
const Ifly = ({ s }: { s: number }) => (
  <svg width={s} height={s} viewBox="0 0 26 26"><circle cx="13" cy="13" r="11.700" fill="#fff" stroke="#3f7bea" strokeWidth="2.300" /><text x="13" y="16.500" fontSize="9.500" fontWeight="700" fontStyle="italic" textAnchor="middle" fill="#3f7bea" fontFamily="Open Sans">iFLY</text></svg>
);
const Speaker = ({ color }: { color: string }) => <g fill="none" stroke={color} strokeWidth="1.500"><path d="M1 7.500h3l4-4v13l-4-4H1z" /><path d="M11 7q2 3 0 6M13.500 5q3.500 5 0 10M16 3q5 7 0 14" /></g>;

const TRAY: React.ReactNode[] = [
  <I><path d="m5 12 5-5 5 5" stroke="#fff" strokeWidth="1.400" fill="none" /></I>,
  <Languages size={23} color="#9a78d8" strokeWidth={2.4} />,
  <I><circle cx="10" cy="10" r="8.500" fill="none" stroke="#ddd" strokeWidth="2" /><circle cx="10" cy="10" r="5" fill="#3fd25b" /></I>,
  <I><path d="M11 2v13L1 18z" fill="#f01818" /><path d="m12 8 7 10-6-2z" fill="#17a04a" /></I>,
  <Text $color="#e3b27c" $size={22} $weight={700}><Mixed>R</Mixed></Text>,
  <Mic color="#9bd6f5" />,
  <I><rect x="2" y="1" width="16" height="18" fill="#4ea4e0" /><rect x="12" y="1" width="3" height="18" fill="#dceffb" /></I>,
  <I><Speaker color="#fff" /></I>,
  <I><rect x="2" y="1" width="16" height="18" fill="#c98a52" /><path d="M3 6h14M3 12h14" stroke="#fbe3b8" strokeWidth="2" /></I>,
  <I><circle cx="10" cy="10" r="9" fill="#fff" /><path d="M5 3q4 2 5 5-4 4-5 8M15 3q-4 2-5 5 4 4 5 8" stroke="#000" strokeWidth="2.200" fill="none" /></I>,
  <I><rect width="20" height="20" fill="#fff" /><path d="M4 4h12M11 4 9 16M3 16h13" stroke="#000" strokeWidth="2" /></I>,
  <I><rect width="20" height="20" fill="#8c1016" /><path d="M3 7.500h3l4-4v13l-4-4H3z" fill="#fff" /><path d="M12.500 7q2 3 0 6M15 5q3.500 5 0 10" stroke="#fff" strokeWidth="1.500" fill="none" /></I>,
  <I><path d="M13 2H2v13h13v-5M5 18.500h7M8.500 15v3" fill="none" stroke="#fff" strokeWidth="1.400" /><rect x="14.500" y="1" width="4" height="6" rx="1" fill="none" stroke="#fff" strokeWidth="1.300" /></I>,
  <Text $han={500}><Mixed>中</Mixed></Text>,
];

const Clock = styled.div`margin-left: 11px; font-size: 18px; line-height: 37px;`;
const Alarm = styled.div`
  position: absolute; left: 2445px; top: 1419px; width: 115px; height: 21px; background: #808080; padding: 7px 6px 0 13px;
  i { display: block; height: 14px; background: #fb0303; border: solid #e8e8e8; border-width: 1px 5px 0 1px; }
`;

const DeskBar = () => (
  <TaskBar>
    <Slot $w={35}><svg width="21" height="22" viewBox="0 0 21 22"><path d="M0 0h10v10.500H0z" fill="#8cc8f0" /><path d="M11 0h10v10.500H11zM0 11.500h10V22H0z" fill="#6ab4ea" /><path d="M11 11.500h10V22H11z" fill="#4a9fe0" /></svg></Slot>
    <Slot $w={33}><Search size={23} color="#fff" strokeWidth={2.2} /></Slot>
    <Gap $w={9} />
    {APPS.map((a, i) => <TaskItem key={i} $active={a.active} $pl={a.pl}><AppIcon>{a.icon}</AppIcon><Mixed>{a.name}</Mixed></TaskItem>)}
    <Tray>
      {TRAY.map((t, i) => <TrayCell key={i}>{t}</TrayCell>)}
      <Slot $w={44}><Ifly s={21} /></Slot>
    </Tray>
    <Clock><Mixed>11:12</Mixed></Clock>
    <Slot $w={44}><svg width="16" height="18" viewBox="0 0 16 18" fill="none" stroke="#fff" strokeWidth="1.500"><path d="M2.500 14V7.500a5.500 5.500 0 0 1 11 0V14M0 14h16" /></svg></Slot>
  </TaskBar>
);

export default function App() {
  return (
    <Screen>
      <Global />
      <TitleBar>
        <TabGroup $w={584} $pl={8}>
          <IconButton><SideToggle /></IconButton>
          <IconButton $active $ml={21}><CalendarCheck size={30} strokeWidth={1.75} /></IconButton>
          <IconButton $ml={4}><Bookmark size={30} strokeWidth={1.75} /></IconButton>
        </TabGroup>
        <TabGroup $w={1039} $pl={30}>
          <Tab $active $w={333}><Mixed>2024-10-08</Mixed><X size={27} strokeWidth={1.75} color="#cfcfcf" /></Tab>
          <Tab $w={333}><Mixed>Daily</Mixed></Tab>
          <TabDivider />
          <Slot $w={62}><Plus size={31} strokeWidth={1.6} /></Slot>
          <Spacer />
          <Slot $w={84}><ChevronDown size={30} strokeWidth={1.9} /></Slot>
        </TabGroup>
        <TabGroup $w={607} $pl={30}>
          <Tab $active $w={332}><Text $color={c.muted}><Mixed>README</Mixed></Text><X size={27} strokeWidth={1.75} color="#cfcfcf" /></Tab>
          <Slot $w={64}><Plus size={31} strokeWidth={1.6} /></Slot>
          <Spacer />
          <Slot $w={26}><ChevronDown size={30} strokeWidth={1.9} /></Slot>
          <Slot $w={80}><SideToggle right /></Slot>
        </TabGroup>
        <TabGroup $w={330} $pl={12}>
          <IconButton $active $w={56}><LinkOut /></IconButton>
          <Slot $w={61}><ListGlyph /></Slot>
          <Slot $w={38}><svg width="18" height="4"><path d="M0 2h18" stroke="#dadada" strokeWidth="1.600" /></svg></Slot>
          <Slot $w={108}><RestoreGlyph /></Slot>
          <Slot $w={36}><svg width="17" height="17" viewBox="0 0 17 17"><path d="m1 1 15 15M16 1 1 16" stroke="#dadada" strokeWidth="1.600" /></svg></Slot>
        </TabGroup>
      </TitleBar>

      <Body>
        <Ribbon>
          <RibbonItem><LayoutDashboard size={30} strokeWidth={1.75} /></RibbonItem>
          <RibbonItem><FileSearchGlyph /></RibbonItem>
          <RibbonItem><GitFork size={30} strokeWidth={1.75} /></RibbonItem>
          <RibbonItem><Terminal size={30} strokeWidth={1.75} /></RibbonItem>
          <RibbonItem><LayoutGlyph /></RibbonItem>
          <RibbonItem><DiceGlyph /></RibbonItem>
          <RibbonItem><DayGlyph /></RibbonItem>
          <RibbonItem><Text $size={22}>{'<%'}</Text></RibbonItem>
        </Ribbon>
        <Sidebar><Calendar /><TagsPanel /></Sidebar>
        <DailyNote />
        <Readme />
        <Links>
          <LinksHead $mt={23} $color={c.text}><Text><Mixed>当前笔记中的链接</Mixed></Text><Text $color={c.faint}><Mixed>1</Mixed></Text></LinksHead>
          <LinkItem>
            <Link size={26} strokeWidth={1.75} />
            <LinkLines>
              <div><Mixed>1. Projects/分享-2023</Mixed></div>
              <div><Mixed>WOT 分享会/README</Mixed></div>
              <div><Mixed>1. Projects/分享-2023 WOT</Mixed></div>
              <div><Mixed>分享会</Mixed></div>
            </LinkLines>
          </LinkItem>
          <LinksHead $mt={37} $color="#5c5c5c"><Text><Mixed>当前笔记中潜在的链接</Mixed></Text></LinksHead>
        </Links>
      </Body>
      <DeskBar />

      <StatusBar>
        <Text><Mixed>0 条反向链接</Mixed></Text>
        <BookOpen size={29} strokeWidth={1.75} />
        <Text><Mixed>126 个词</Mixed></Text>
        <Text><Mixed>505 个字符</Mixed></Text>
      </StatusBar>
      <Ime>
        <Slot $w={28}><Ifly s={27} /></Slot>
        <Slot $w={50} $color="#3f7bea"><Text $han={500}><Mixed>中</Mixed></Text></Slot>
        <Slot $w={16}><svg width="18" height="22" viewBox="0 0 16 20"><circle cx="4" cy="5" r="3" fill="none" stroke="#3f7bea" strokeWidth="2" /><path d="M12 9a3 3 0 1 1-1 5.800q.5 2-1 3.700 5-1.500 5-6A3 3 0 0 0 12 9z" fill="#3f7bea" /></svg></Slot>
        <Slot $w={50}><Mic color="#3f7bea" /></Slot>
        <Slot $w={16}><svg width="19" height="19" viewBox="0 0 19 19" fill="#3f7bea"><rect width="8.500" height="8.500" rx="1" /><rect y="10.500" width="8.500" height="8.500" rx="1" /><rect x="10.500" y="10.500" width="8.500" height="8.500" rx="1" /><path d="m14.700 0 4.300 4.300-4.300 4.300-4.300-4.300z" /></svg></Slot>
      </Ime>
      <EdgeHandle><i /></EdgeHandle>
      <Recorder />
      <Alarm><i /></Alarm>
    </Screen>
  );
}
